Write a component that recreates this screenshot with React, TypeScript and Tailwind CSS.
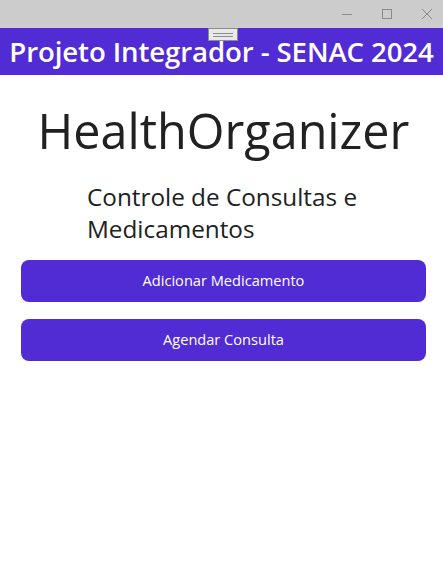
import React from "react";

export default function App() {
  return (
    <div className="w-[443px] h-[582px] bg-white flex flex-col overflow-hidden relative" style={{ fontFamily: '"Open Sans", "Noto Sans", sans-serif' }}>
      <div className="h-[28px] bg-[#cccccc] flex items-center justify-end gap-[30px] pr-[11px] shrink-0">
        <div className="w-[10px] h-px bg-[#8a8a8a]" />
        <div className="w-[10px] h-[10px] border border-[#8a8a8a]" />
        <svg width="10" height="10" viewBox="0 0 10 10" stroke="#8a8a8a" strokeWidth="1">
          <path d="M0 0L10 10M10 0L0 10" />
        </svg>
      </div>
      <div className="h-[47px] bg-[#512bd4] flex items-center justify-center shrink-0 relative">
        <span className="text-white font-semibold text-[27.6px] leading-none tracking-[-0.1px] mt-[1px] whitespace-nowrap">Projeto Integrador - SENAC 2024</span>
        <div className="absolute left-[208px] top-0 w-[30px] h-[13px] bg-[#e9e9e9] border border-[#8c8c8c] flex flex-col items-center justify-center gap-[2px]">
          <div className="w-[20px] h-px bg-[#8c8c8c]" />
          <div className="w-[20px] h-px bg-[#8c8c8c]" />
        </div>
      </div>
      <div className="flex flex-col pl-[21px] pr-[17px]">
        <h1 className="text-[48.5px] leading-none text-[#212121] text-center mt-[31px]">HealthOrganizer</h1>
        <p className="text-[24.3px] leading-[32px] text-[#212121] ml-[66px] w-[300px] mt-[26px]">Controle de Consultas e Medicamentos</p>
        <button className="mt-[15px] h-[42px] rounded-[8px] bg-[#512bd4] text-white text-[14.6px]">Adicionar Medicamento</button>
        <button className="mt-[17px] h-[42px] rounded-[8px] bg-[#512bd4] text-white text-[14.6px]">Agendar Consulta</button>
      </div>
    </div>
  );
}
